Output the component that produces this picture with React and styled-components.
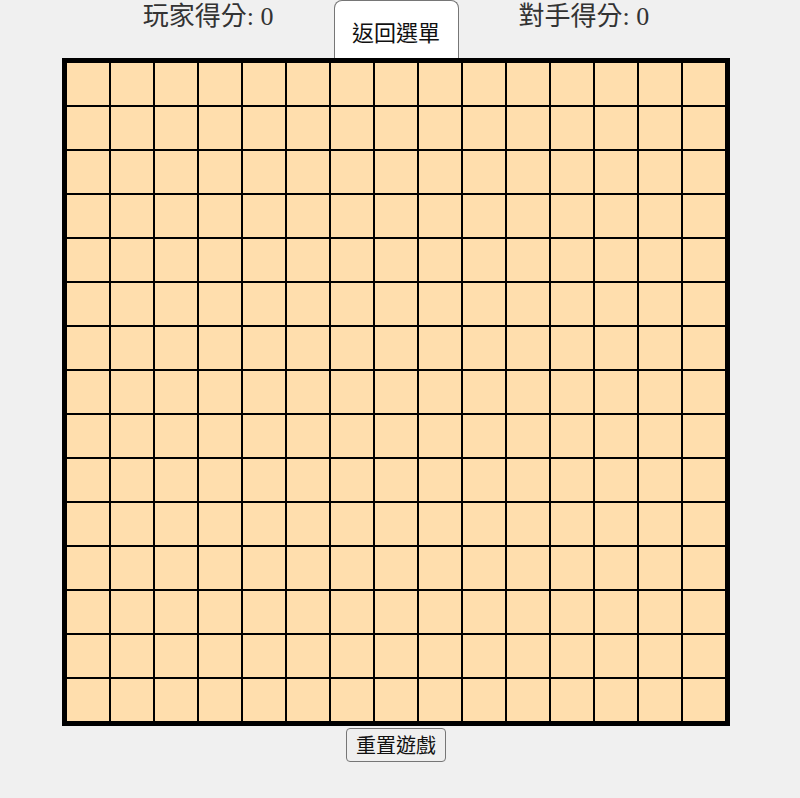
import React from "react";
import styled, { createGlobalStyle } from "styled-components";

const GlobalStyle = createGlobalStyle`
  html, body {
    margin: 0;
    padding: 0;
    background: #f0f0f0;
  }
  body {
    font-family: "Liberation Serif", "Noto Sans CJK TC", serif;
  }
`;

const Page = styled.div`
  width: 792px;
  display: flex;
  flex-direction: column;
  align-items: center;
`;

const Header = styled.div`
  height: 58px;
  display: flex;
  align-items: flex-start;
  justify-content: center;
  gap: 60px;
`;

const Score = styled.div`
  font-family: "Liberation Serif", "Noto Sans CJK TC", serif;
  font-size: 26px;
  line-height: 34px;
  color: #333;
  white-space: nowrap;
`;

const MenuButton = styled.button`
  box-sizing: border-box;
  width: 125px;
  height: 58px;
  padding: 2px 0 0;
  margin: 0;
  display: flex;
  align-items: center;
  justify-content: center;
  background: #fff;
  border: 1px solid #767676;
  border-bottom: none;
  border-radius: 8px 8px 0 0;
  font-family: "Noto Sans CJK TC", sans-serif;
  font-size: 22px;
  color: #111;
  cursor: pointer;
`;

const Board = styled.div`
  display: grid;
  grid-template-columns: repeat(${(p) => p.size}, 44px);
  grid-auto-rows: 44px;
  border: 4px solid #000;
  background: #ffdead;
`;

const Cell = styled.div`
  border: 1px solid #000;
  background: #ffdead;
`;

const ResetButton = styled.button`
  box-sizing: border-box;
  margin-top: 2px;
  width: 100px;
  height: 34px;
  padding: 0;
  background: #efefef;
  border: 1px solid #767676;
  border-radius: 4px;
  font-family: "Noto Sans CJK TC", sans-serif;
  font-size: 20px;
  line-height: 1;
  color: #111;
  cursor: pointer;
`;

const SIZE = 15;

export default function App() {
  const cells = Array.from({ length: SIZE * SIZE });
  return (
    <>
      <GlobalStyle />
      <Page>
        <Header>
          <Score>玩家得分: 0</Score>
          <MenuButton>返回選單</MenuButton>
          <Score>對手得分: 0</Score>
        </Header>
        <Board size={SIZE}>
          {cells.map((_, i) => (
            <Cell key={i} />
          ))}
        </Board>
        <ResetButton>重置遊戲</ResetButton>
      </Page>
    </>
  );
}
